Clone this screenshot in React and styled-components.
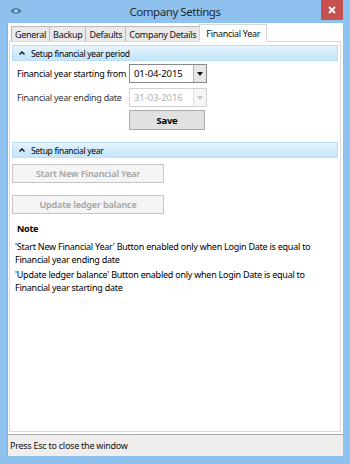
import React from 'react';
import styled, { createGlobalStyle } from 'styled-components';

const GlobalStyle = createGlobalStyle`
  html, body {
    margin: 0;
    padding: 0;
    background: #ffffff;
  }
  body {
    font-family: "Noto Sans", "Open Sans", sans-serif;
    font-size: 9px;
    letter-spacing: -0.25px;
    color: #000;
  }
`;

const Window = styled.div`
  width: 350px;
  height: 464px;
  background: #8fc1ef;
  display: flex;
  flex-direction: column;
  box-sizing: border-box;
  padding: 0 7px 8px 7px;
`;

const TitleBar = styled.div`
  height: 23px;
  display: flex;
  align-items: center;
  position: relative;
  flex-shrink: 0;
`;

const AppIcon = styled.svg`
  width: 12px;
  height: 8px;
  margin-left: 3px;
  margin-top: -2px;
`;

const Title = styled.div`
  flex: 1;
  text-align: center;
  font-size: 11.5px;
  color: #1e2a36;
  margin-top: -1px;
  padding-right: 15px;
  letter-spacing: -0.45px;
`;

const CloseButton = styled.div`
  position: absolute;
  right: 0;
  top: 0;
  width: 22px;
  height: 20px;
  background: #c75050;
  display: flex;
  align-items: center;
  justify-content: center;
`;

const Client = styled.div`
  flex: 1;
  background: #ffffff;
  border-left: 1px solid #a8a8a8;
  display: flex;
  flex-direction: column;
  min-height: 0;
`;

const TabArea = styled.div`
  flex: 1;
  display: flex;
  flex-direction: column;
  padding: 0 2px 2px 1px;
`;

const TabStrip = styled.div`
  display: flex;
  align-items: flex-end;
  height: 18px;
  padding-left: 2px;
  position: relative;
  z-index: 1;
`;

const Tab = styled.div`
  height: ${p => (p.$active ? '18px' : '15px')};
  box-sizing: border-box;
  padding: 0 ${p => (p.$active ? '6px' : '3px')};
  display: flex;
  align-items: center;
  letter-spacing: -0.3px;
  background: ${p => (p.$active ? '#ffffff' : '#eaeaea')};
  border: 1px solid ${p => (p.$active ? '#d6d6d6' : '#b9b9b9')};
  border-bottom: ${p => (p.$active ? '1px solid #ffffff' : 'none')};
  margin-right: -1px;
  margin-bottom: ${p => (p.$active ? '-1px' : '0')};
  color: #111;
`;

const Panel = styled.div`
  flex: 1;
  border: 1px solid #d9d9d9;
  padding: 3px 2px;
  display: flex;
  flex-direction: column;
`;

const SectionHeader = styled.div`
  height: 16px;
  box-sizing: border-box;
  border: 1px solid #b9dff7;
  background: linear-gradient(#e6f4fd, #d0eafb 55%, #c6e6fa);
  display: flex;
  align-items: center;
  padding-left: 6px;
  gap: 6px;
  font-size: 8.5px;
  letter-spacing: -0.3px;
  margin-top: ${p => p.$top || 0}px;
`;

const Caret = styled.svg`
  width: 6px;
  height: 4px;
`;

const FormRow = styled.div`
  display: flex;
  align-items: center;
  margin-top: ${p => p.$top}px;
  padding-left: 5px;
`;

const Label = styled.div`
  width: 112px;
  white-space: nowrap;
  color: ${p => (p.$muted ? '#333' : '#000')};
`;

const DateBox = styled.div`
  width: 78px;
  height: 19px;
  box-sizing: border-box;
  border: 1px solid ${p => (p.$disabled ? '#d2d2d2' : '#8a8a8a')};
  display: flex;
  align-items: stretch;
  background: #fff;
`;

const DateText = styled.div`
  flex: 1;
  display: flex;
  align-items: center;
  padding-left: 4px;
  font-size: 9.5px;
  letter-spacing: -0.1px;
  color: ${p => (p.$disabled ? '#b0b0b0' : '#000')};
`;

const DropButton = styled.div`
  width: 12px;
  border-left: 1px solid ${p => (p.$disabled ? '#dedede' : '#b5b5b5')};
  background: ${p => (p.$disabled ? '#f6f6f6' : '#e6e6e6')};
  display: flex;
  align-items: center;
  justify-content: center;
`;

const SaveButton = styled.div`
  width: 76px;
  height: 20px;
  box-sizing: border-box;
  margin: 3px 0 0 117px;
  background: #e1e1e1;
  border: 1px solid #acacac;
  display: flex;
  align-items: center;
  justify-content: center;
  font-weight: 700;
  font-size: 9.5px;
`;

const WideButton = styled.div`
  width: 152px;
  height: 19px;
  box-sizing: border-box;
  margin-top: ${p => p.$top}px;
  background: #f4f4f4;
  border: 1px solid #c6c6c6;
  display: flex;
  align-items: center;
  justify-content: center;
  font-weight: 600;
  letter-spacing: -0.1px;
  color: #a2a2a2;
`;

const NoteTitle = styled.div`
  margin: 8px 0 0 5px;
  font-weight: 700;
  line-height: 14px;
`;

const NoteText = styled.p`
  margin: ${p => p.$top}px 0 0 3px;
  line-height: 12.5px;
  color: #000;
`;

const StatusBar = styled.div`
  height: 21px;
  border-top: 1px solid #a9a9a9;
  background: #f0eeec;
  display: flex;
  align-items: center;
  padding-left: 2px;
  color: #111;
`;

const tabs = ['General', 'Backup', 'Defaults', 'Company Details', 'Financial Year'];

const Arrow = ({ disabled }) => (
  <svg width="6" height="4" viewBox="0 0 6 4">
    <polygon points="0,0 6,0 3,4" fill={disabled ? '#c8c8c8' : '#111'} />
  </svg>
);

const CaretUp = () => (
  <Caret viewBox="0 0 6 4">
    <polyline points="0.5,3.5 3,1 5.5,3.5" fill="none" stroke="#111" strokeWidth="1.4" />
  </Caret>
);

const App = () => (
  <>
    <GlobalStyle />
    <Window>
      <TitleBar>
        <AppIcon viewBox="0 0 12 8">
          <path d="M0 4 Q6 -2 12 4 Q6 10 0 4 Z" fill="#4a7fa8" />
          <circle cx="6" cy="4" r="1.6" fill="#cfe6f7" />
        </AppIcon>
        <Title>Company Settings</Title>
        <CloseButton>
          <svg width="8" height="8" viewBox="0 0 8 8">
            <path d="M1 1 L7 7 M7 1 L1 7" stroke="#fff" strokeWidth="1.8" />
          </svg>
        </CloseButton>
      </TitleBar>
      <Client>
        <TabArea>
          <TabStrip>
            {tabs.map((t, i) => (
              <Tab key={t} $active={i === tabs.length - 1}>{t}</Tab>
            ))}
          </TabStrip>
          <Panel>
            <SectionHeader $top={0}>
              <CaretUp />
              Setup financial year period
            </SectionHeader>
            <FormRow $top={3}>
              <Label>Financial year starting from</Label>
              <DateBox>
                <DateText>01-04-2015</DateText>
                <DropButton><Arrow /></DropButton>
              </DateBox>
            </FormRow>
            <FormRow $top={5}>
              <Label $muted>Financial year ending date</Label>
              <DateBox $disabled>
                <DateText $disabled>31-03-2016</DateText>
                <DropButton $disabled><Arrow disabled /></DropButton>
              </DateBox>
            </FormRow>
            <SaveButton>Save</SaveButton>
            <SectionHeader $top={12}>
              <CaretUp />
              Setup financial year
            </SectionHeader>
            <WideButton $top={6}>Start New Financial Year</WideButton>
            <WideButton $top={12}>Update ledger balance</WideButton>
            <NoteTitle>Note</NoteTitle>
            <NoteText $top={5}>
              'Start New Financial Year' Button enabled only when Login Date is equal to<br />
              Financial year ending date
            </NoteText>
            <NoteText $top={3}>
              'Update ledger balance' Button enabled only when Login Date is equal to<br />
              Financial year starting date
            </NoteText>
          </Panel>
        </TabArea>
        <StatusBar>Press Esc to close the window</StatusBar>
      </Client>
    </Window>
  </>
);

export default App;
